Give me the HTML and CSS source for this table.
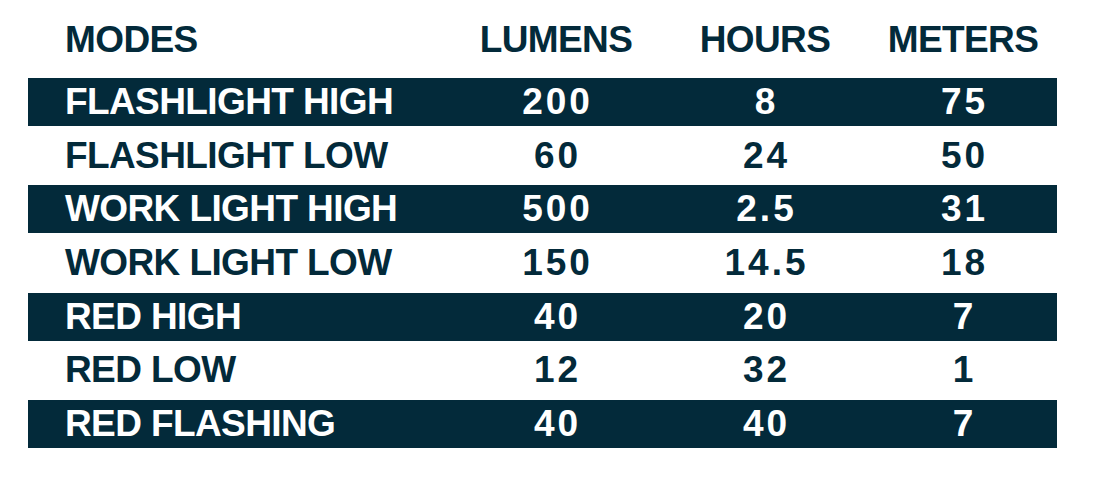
FILE: index.html
```html
<!DOCTYPE html>
<html lang="en">
<head>
<meta charset="utf-8">
<title>Modes</title>
<link rel="stylesheet" href="styles.css">
</head>
<body>
<div class="table">
  <div class="row head">
    <div class="cell name">MODES</div>
    <div class="cell">LUMENS</div>
    <div class="cell">HOURS</div>
    <div class="cell">METERS</div>
  </div>
  <div class="rows">
    <div class="row dark"><div class="cell name">FLASHLIGHT HIGH</div><div class="cell num">200</div><div class="cell num">8</div><div class="cell num">75</div></div>
    <div class="row"><div class="cell name">FLASHLIGHT LOW</div><div class="cell num">60</div><div class="cell num">24</div><div class="cell num">50</div></div>
    <div class="row dark"><div class="cell name">WORK LIGHT HIGH</div><div class="cell num">500</div><div class="cell num">2.5</div><div class="cell num">31</div></div>
    <div class="row"><div class="cell name">WORK LIGHT LOW</div><div class="cell num">150</div><div class="cell num">14.5</div><div class="cell num">18</div></div>
    <div class="row dark"><div class="cell name">RED HIGH</div><div class="cell num">40</div><div class="cell num">20</div><div class="cell num">7</div></div>
    <div class="row"><div class="cell name">RED LOW</div><div class="cell num">12</div><div class="cell num">32</div><div class="cell num">1</div></div>
    <div class="row dark"><div class="cell name">RED FLASHING</div><div class="cell num">40</div><div class="cell num">40</div><div class="cell num">7</div></div>
  </div>
</div>
</body>
</html>
```

FILE: styles.css
```css
html, body {
  margin: 0;
  padding: 0;
  background: #ffffff;
}

body {
  font-family: "Liberation Sans", Arial, sans-serif;
  font-weight: 700;
  color: #032a3a;
}

.table {
  width: 1029px;
  margin: 16px 0 0 28px;
  display: flex;
  flex-direction: column;
  gap: 14px;
}

.rows {
  display: flex;
  flex-direction: column;
  gap: 5.67px;
}

.row {
  display: grid;
  grid-template-columns: 438px 180px 238px 158px;
  padding-right: 15px;
  height: 48px;
  font-size: 37px;
  line-height: 48px;
  letter-spacing: -0.6px;
}

.row.dark {
  background: #032a3a;
  color: #ffffff;
}

.cell {
  text-align: center;
  white-space: nowrap;
}

.cell.num {
  letter-spacing: 3px;
  padding-left: 3px;
}

.cell.name {
  text-align: left;
  padding-left: 37px;
}
```
